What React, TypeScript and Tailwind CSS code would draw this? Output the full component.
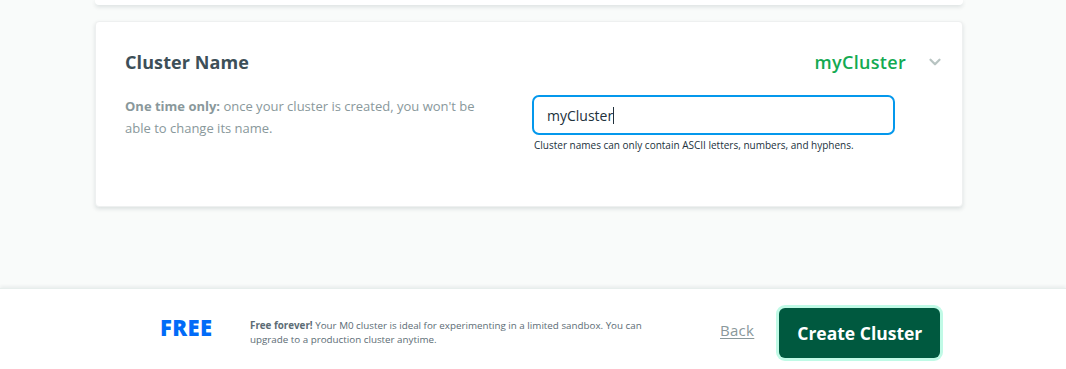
import React from 'react';
import { ChevronDown } from 'lucide-react';

const FONT = { fontFamily: '"Open Sans", Lato, sans-serif' };

export default function App() {
  return (
    <div className="w-full h-[369px] bg-[#f9fbfa] flex flex-col overflow-hidden" style={FONT}>
      {/* previous card remnant */}
      <div className="mx-[95px] w-[868px] h-[5px] bg-white rounded-b-[4px] shadow-[0_2px_4px_rgba(0,30,43,0.12)]" />

      {/* Cluster Name card */}
      <div className="mt-[16px] ml-[95px] w-[868px] h-[186px] bg-white rounded-[4px] border border-[#eef0f0] shadow-[0_2px_4px_rgba(0,30,43,0.12)] pl-[29px] pr-[18px] pt-[27px]">
        <div className="flex items-center justify-between h-[26px]">
          <h2 className="text-[18px] font-bold text-[#3d4f58] tracking-[0.1px]">Cluster Name</h2>
          <div className="flex items-center gap-[20px]">
            <span className="text-[18px] font-semibold text-[#13aa52] tracking-[0.3px]">myCluster</span>
            <ChevronDown size={18} strokeWidth={3} className="text-[#b8c4c2]" />
          </div>
        </div>
        <div className="flex mt-[20px]">
          <p className="w-[370px] text-[13px] leading-[22px] text-[#89989b]">
            <strong className="font-bold">One time only:</strong> once your cluster is created, you won't be able to change its name.
          </p>
          <div className="ml-[37px] flex flex-col">
            <div className="w-[363px] h-[40px] rounded-[7px] border-2 border-[#0498ec] flex items-center px-[13px]">
              <span className="text-[14px] text-[#21313c]">myCluster</span>
              <span className="w-px h-[17px] bg-[#21313c]" />
            </div>
            <span className="mt-[3px] ml-[2px] text-[10px] leading-[15px] text-[#21313c]">
              Cluster names can only contain ASCII letters, numbers, and hyphens.
            </span>
          </div>
        </div>
      </div>

      <div className="flex-1" />

      {/* footer */}
      <div className="h-[81px] bg-white border-t border-[#e7eeec] shadow-[0_-2px_3px_rgba(0,30,43,0.06)] flex items-center pt-[8px]">
        <span className="ml-[160px] w-[90px] text-[22px] font-extrabold text-[#016bf8] tracking-[0.4px] -mt-[12px]">FREE</span>
        <p className="w-[420px] text-[9.8px] leading-[14px] text-[#5c6c75]">
          <strong className="font-bold">Free forever!</strong> Your M0 cluster is ideal for experimenting in a limited sandbox. You can upgrade to a production cluster anytime.
        </p>
        <a className="ml-[50px] text-[15px] text-[#89989b] underline underline-offset-2 -mt-[6px] tracking-[0.3px]">Back</a>
        <button className="ml-[25px] w-[161px] h-[50px] rounded-[6px] bg-[#00593f] ring-[3px] ring-[#c0fae6] text-white text-[17.5px] font-bold">
          Create Cluster
        </button>
      </div>
    </div>
  );
}
